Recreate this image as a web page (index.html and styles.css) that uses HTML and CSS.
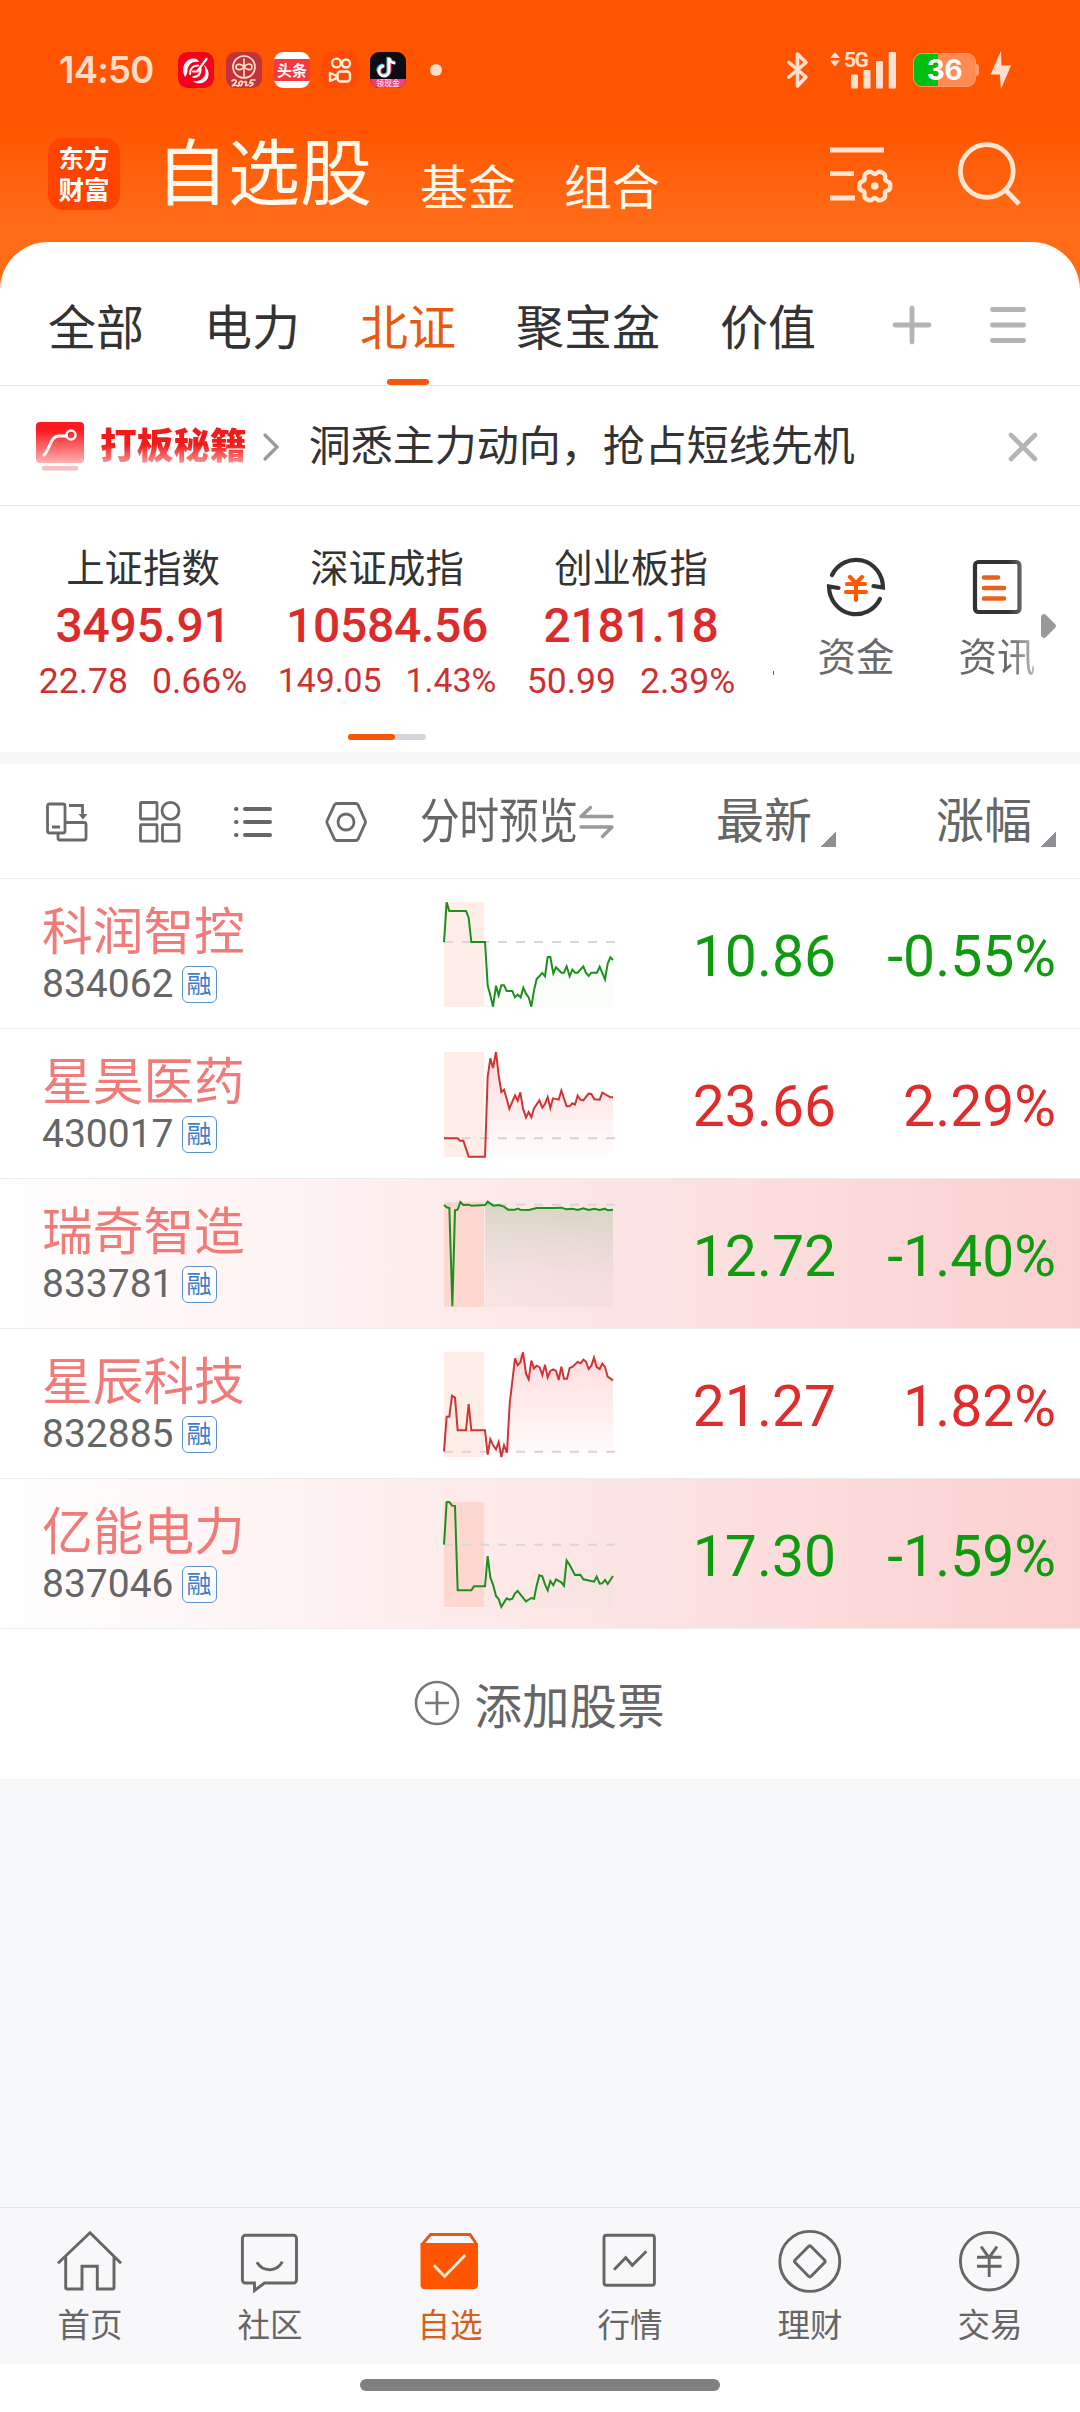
FILE: index.html
```html
<!DOCTYPE html>
<html lang="zh-CN">
<head>
<meta charset="utf-8">
<title>自选股</title>
<link rel="stylesheet" href="styles.css">
</head>
<body>
<div class="app">
  <header class="status">
    <span class="clock">14:50</span>
    <div class="apps">
      <svg class="app-icon" viewBox="0 0 36 36"><rect width="36" height="36" rx="9" fill="#f5001d"/><path d="M7 25C3 17 6 8 14 6.500c4-.5 6 1 7 3.500-6-1.500-11 2-11.500 8 0 3-1 5-2.500 7zM26 13c6 5 6 13 1 16.500-4 3-10 2-12-.5 7 1 12-3 12.500-8 0-3-.5-5-1.500-8z" fill="#fff"/><path d="M28.500 7 19.500 19M12 22c0-6 4-8.500 8-8.500M15.500 25c5 0 7-3 7-8M15 19.500h4" stroke="#fff" stroke-width="2.200" fill="none" stroke-linecap="round"/></svg>
      <svg class="app-icon" viewBox="0 0 36 36"><rect width="36" height="36" rx="9" fill="#c4303c"/><g fill="none" stroke="#f9dfc0" stroke-width="1.700" stroke-linecap="round"><circle cx="18" cy="15" r="11"/><path d="M18 7v18M18 15c-3-4-8-3-8 0s5 4 8 0 8-4 8 0-5 3-8 0M6 29c2-2 5-1 4 1s-3 3-4 4c2-1 4-1 6 0M13 31c2-3 4-2 3 1s-4 1-3-1M18 30c2-1 3 0 2 2s0 2 2 1M29 28h-4l-1 3c4-1 4 2 0 3"/></g></svg>
      <span class="app-icon news"><b>头条</b></span>
      <svg class="app-icon" viewBox="0 0 36 36"><rect width="36" height="36" rx="9" fill="#ff4a08"/><g fill="none" stroke="#fff0dc" stroke-width="2.400"><circle cx="14.500" cy="11" r="4.400"/><circle cx="24" cy="11.500" r="4"/><rect x="15.500" y="19.500" width="12.500" height="10" rx="3"/><path d="m8 21 6 2.500v3L8 29z" stroke-linejoin="round"/></g></svg>
      <span class="app-icon video"><svg viewBox="0 0 36 27"><path d="M19 6v13a5 5 0 1 1-5-5M19 6c1 4 3 5 6 5" fill="none" stroke="#25e4e4" stroke-width="3" transform="translate(-1 -1)"/><path d="M19 6v13a5 5 0 1 1-5-5M19 6c1 4 3 5 6 5" fill="none" stroke="#fb2b57" stroke-width="3" transform="translate(1 0)"/><path d="M19 6v13a5 5 0 1 1-5-5M19 6c1 4 3 5 6 5" fill="none" stroke="#fff" stroke-width="2.800"/></svg><i>领现金</i></span>
    </div>
    <span class="dot"></span>
    <div class="status-right">
      <svg width="22" height="38" viewBox="0 0 22 38" fill="none" stroke="#ffdfcf" stroke-width="3.600" stroke-linejoin="round" stroke-linecap="round"><path d="M2 11.500 19 26 10.500 35V3L19 11.500 2 26"/></svg>
      <div class="signal">
        <svg width="68" height="38" viewBox="0 0 68 38" fill="#ffdfcf"><path d="m1 7 5-6 5 6zM1 9.500h10l-5 6z"/><rect x="22" y="23.500" width="7" height="14" rx="1"/><rect x="34.500" y="19" width="7" height="18.500" rx="1"/><rect x="47" y="10" width="7" height="27.500" rx="1"/><rect x="59.700" y="1" width="7.300" height="36.500" rx="1"/></svg>
        <b>5G</b>
      </div>
      <div class="battery"><span>36</span></div>
      <svg width="22" height="40" viewBox="0 0 22 40" fill="#ffdfcf"><path d="M11 1 .5 24.500H9.800L11 39 21 15.500h-9.500z"/></svg>
    </div>
  </header>

  <nav class="titlebar">
    <div class="logo"><span>东方</span><span>财富</span></div>
    <h1>自选股</h1>
    <a class="top-link">基金</a>
    <a class="top-link">组合</a>
    <div class="tools">
      <svg width="62" height="62" viewBox="0 0 62 62" fill="none" stroke="#ffe5d2" stroke-width="4.800"><path d="M0 8h54M0 31.700h24M0 56h25"/><path transform="translate(44.800 44)" stroke-width="4.400" d="M12.500-4.700Q15.500-3.900 15.500 0Q15.500 3.900 12.500 4.700Q9.500 5.500 10.300 8.500Q11.100 11.500 7.750 13.450Q4.400 15.400 2.200 13.200Q0 11-2.200 13.200Q-4.400 15.400-7.750 13.450Q-11.100 11.500-10.300 8.500Q-9.500 5.500-12.500 4.700Q-15.500 3.900-15.500 0Q-15.500-3.900-12.500-4.700Q-9.500-5.500-10.300-8.500Q-11.100-11.500-7.750-13.450Q-4.400-15.400-2.200-13.200Q0-11 2.200-13.200Q4.400-15.400 7.750-13.450Q11.100-11.500 10.300-8.500Q9.500-5.500 12.500-4.700z"/><circle cx="44.800" cy="44" r="3.800" fill="#ffe5d2" stroke="none"/></svg>
      <svg width="62" height="64" viewBox="0 0 62 64" fill="none" stroke="#ffe5d2" stroke-width="4.800"><circle cx="28.800" cy="29" r="26.400"/><path d="m47 47.500 14 14.500"/></svg>
    </div>
  </nav>

  <main class="sheet">
    <div class="tabs">
      <span>全部</span><span>电力</span><span class="active">北证</span><span>聚宝盆</span><span>价值</span>
      <div class="tab-tools">
        <svg width="40" height="40" viewBox="0 0 40 40" stroke="#b4b4b4" stroke-width="4.800" stroke-linecap="round"><path d="M3 20h34M20 3v34"/></svg>
        <svg width="36" height="40" viewBox="0 0 36 40" stroke="#b4b4b4" stroke-width="4.800" stroke-linecap="round"><path d="M2.400 4.500h31.200M2.400 20h31.200M2.400 35.500h31.200"/></svg>
      </div>
    </div>

    <div class="promo">
      <svg width="48" height="50" viewBox="0 0 48 50"><defs><linearGradient id="pg" x1="0" y1="0" x2="0" y2="1"><stop offset=".2" stop-color="#fb1a1f"/><stop offset="1" stop-color="#fbb2b2"/></linearGradient></defs><rect width="48" height="41" rx="4" fill="url(#pg)"/><rect x="6" y="44" width="36" height="4.500" rx="1.500" fill="#f7c1c1"/><path d="M8 33c6-5 6-19 15-19h7" fill="none" stroke="#fff" stroke-width="3" stroke-linecap="round"/><circle cx="35" cy="13" r="4.500" fill="none" stroke="#fff" stroke-width="2.500"/></svg>
      <b class="promo-name">打板秘籍</b>
      <svg class="chev" width="16" height="28" viewBox="0 0 16 28" fill="none" stroke="#999" stroke-width="3.200" stroke-linecap="round"><path d="m2 2 12 12L2 26"/></svg>
      <span class="promo-text">洞悉主力动向，抢占短线先机</span>
      <svg class="close" width="30" height="30" viewBox="0 0 30 30" stroke="#b4b4b4" stroke-width="4.600" stroke-linecap="round"><path d="m3 3 24 24M27 3 3 27"/></svg>
    </div>

    <section class="indices">
      <div class="index-row">
        <div class="index"><span>上证指数</span><strong>3495.91</strong><p><i>22.78</i><i>0.66%</i></p></div>
        <div class="index"><span>深证成指</span><strong>10584.56</strong><p class="fit"><i>149.05</i><i>1.43%</i></p></div>
        <div class="index"><span>创业板指</span><strong>2181.18</strong><p><i>50.99</i><i>2.39%</i></p></div>
        <span class="peek"></span>
        <div class="shortcut">
          <svg width="60" height="62" viewBox="0 0 60 62" fill="none" stroke="#333" stroke-width="4.200" stroke-linecap="round" ><path d="M6 19A27 28 0 0 1 57 31.500L47.500 30M54 43A27 28 0 0 1 3 30.500L12.500 32"/><path d="m24 21 6 6 6-6M21 28h18M20 36h20M30 28v16" stroke="#fd5904"/></svg>
          <span>资金</span>
        </div>
        <div class="shortcut news-link">
          <svg width="60" height="62" viewBox="0 0 60 62" fill="none" stroke="#333" stroke-width="4.200" stroke-linecap="round"><rect x="8" y="6" width="44.500" height="50" rx="3.500"/><path d="M17 21.500h14M17 32h20M17 42.500h20" stroke="#e9601a" stroke-width="4.600"/></svg>
          <span>资讯</span>
        </div>
        <svg class="more" width="15" height="24" viewBox="0 0 15 24"><path d="M0 2Q3-2 6 2l8 8q2 2 0 4l-8 8q-3 4-6 0z" fill="#999"/></svg>
      </div>
      <div class="pager"><span></span></div>
    </section>

    <div class="list-head">
      <div class="views">
        <svg width="42" height="42" viewBox="0 0 42 42" fill="none" stroke="#6a6a6a" stroke-width="2.800"><rect x="1.500" y="3" width="17.500" height="29" rx="2"/><path d="M6 26h8M23 4.500h13.500V15M19 21.500h19a2 2 0 0 1 2 2V37a2 2 0 0 1-2 2H14a2 2 0 0 1-2-2v-4.500"/><path d="M32.500 13h9L37 18.500z" fill="#6a6a6a" stroke="none"/></svg>
        <svg width="42" height="42" viewBox="0 0 42 42" fill="none" stroke="#6a6a6a" stroke-width="2.800"><rect x="1.500" y="1.500" width="16.500" height="16.500" rx="1"/><circle cx="31.500" cy="9.800" r="8.500"/><rect x="1.500" y="23.700" width="16.500" height="16.500" rx="1"/><rect x="23.500" y="23.700" width="16.500" height="16.500" rx="1"/></svg>
        <svg width="42" height="42" viewBox="0 0 42 42" fill="none" stroke="#666" stroke-width="4" stroke-linecap="round"><path d="M13 8h25M13 21h25M13 34h25M4 8h.5M4 21h.5M4 34h.5"/></svg>
        <svg width="42" height="42" viewBox="0 0 42 42" fill="none" stroke="#6a6a6a" stroke-width="2.800"><path d="M12 2.500h18.500a3 3 0 0 1 2.600 1.500l7 15.500a3 3 0 0 1 0 3l-7 15.500a3 3 0 0 1-2.600 1.500H12a3 3 0 0 1-2.600-1.500l-7.200-15.500a3 3 0 0 1 0-3L9.400 4A3 3 0 0 1 12 2.500z"/><circle cx="21" cy="21" r="8"/></svg>
      </div>
      <span class="preview">分时预览</span>
      <svg class="swap" width="35" height="34" viewBox="0 0 35 34" fill="none" stroke="#999" stroke-width="3.400" stroke-linecap="round" stroke-linejoin="round"><path d="M33 11.500H2l9.500-9M2 22h31L23.500 31.500"/></svg>
      <span class="sort latest">最新<i></i></span>
      <span class="sort change">涨幅<i></i></span>
    </div>

    <svg class="defs" width="0" height="0"><defs>
      <linearGradient id="gFaint" x1="0" y1="0" x2="0" y2="1"><stop stop-color="#090" stop-opacity=".03"/><stop offset="1" stop-color="#090" stop-opacity=".015"/></linearGradient>
      <linearGradient id="gDeep" x1="0" y1="0" x2="0" y2="1"><stop stop-color="#1c8a1c" stop-opacity=".18"/><stop offset=".75" stop-color="#777" stop-opacity=".06"/><stop offset="1" stop-color="#a88" stop-opacity=".06"/></linearGradient>
      <linearGradient id="rFill" x1="0" y1="0" x2="0" y2="1"><stop stop-color="#f22" stop-opacity=".16"/><stop offset="1" stop-color="#f22" stop-opacity="0.01"/></linearGradient>
    </defs></svg>

    <div class="stock">
      <div class="who"><span class="name">科润智控</span><p>834062<em>融</em></p></div>
      <svg class="chart down" viewBox="72 65 513 315"><rect x="72" y="65" width="120" height="315"/><path class="base" d="M72 185H585"/><path fill="url(#gFaint)" d="M195 380V185l8 130 16 64 9-63 16-1 16 17 34 11 40 36 16-83 25-18 8-48 17 49 100 0 48-2 24-46 8 8V380z"/><polyline points="72,185 80,66 88,92 138,92 146,112 154,185 195,185 203,315 211,345 219,379 228,316 236,345 244,315 252,315 260,332 277,332 285,351 293,343 302,351 310,322 318,340 326,351 334,379 342,330 350,296 367,278 375,288 383,230 391,230 400,279 408,261 424,277 432,277 440,258 449,288 457,268 465,277 473,277 490,258 498,278 506,287 514,277 531,277 539,259 555,297 563,250 571,231 579,239"/></svg>
      <span class="price fall">10.86</span><span class="pct fall">-0.55%</span>
    </div>
    <div class="stock">
      <div class="who"><span class="name">星昊医药</span><p>430017<em>融</em></p></div>
      <svg class="chart up" viewBox="72 515 513 315"><rect x="72" y="515" width="120" height="315"/><path class="base" d="M72 774H585"/><path fill="url(#rFill)" d="M195 829 203 590 211 534 219 563 228 515 236 585 244 635 252 628 268 685 285 645 301 636 318 711 334 711 358 660 383 650 391 683 424 631 440 678 465 673 473 646 506 640 539 658 547 637 579 651V830z"/><polyline points="72,774 113,774 120,781 130,781 146,829 195,829 203,590 211,534 219,563 228,515 236,585 244,635 252,628 260,655 268,685 285,645 293,661 301,636 309,685 318,711 326,695 334,711 342,684 358,660 367,682 375,671 383,650 391,683 399,654 416,658 424,631 440,678 449,678 457,669 465,673 473,646 481,658 490,660 506,640 514,641 523,657 539,658 547,637 571,651 579,651"/></svg>
      <span class="price rise">23.66</span><span class="pct rise">2.29%</span>
    </div>
    <div class="stock hot">
      <div class="who"><span class="name">瑞奇智造</span><p>833781<em>融</em></p></div>
      <svg class="chart down" viewBox="72 965 513 315"><rect x="72" y="965" width="120" height="315"/><path class="base" d="M72 973H585"/><path fill="url(#gDeep)" d="M195 974 203 964 252 979 264 988 326 989 350 983 424 982 579 988V1280H195z"/><polyline points="72,974 80,981 88,983 97,1278 105,990 113,988 121,965 130,974 146,973 154,976 195,974 203,964 220,976 236,974 252,979 264,988 285,988 293,985 301,988 326,989 350,983 400,983 424,982 440,987 457,985 473,989 490,984 506,989 523,985 539,989 555,985 563,990 579,988"/></svg>
      <span class="price fall">12.72</span><span class="pct fall">-1.40%</span>
    </div>
    <div class="stock">
      <div class="who"><span class="name">星辰科技</span><p>832885<em>融</em></p></div>
      <svg class="chart up" viewBox="72 304 513 315"><rect x="72" y="304" width="120" height="315"/><path class="base" d="M72 603H585"/><path fill="url(#rFill)" d="M195 539 203 612 211 566 228 596 244 619 261 606 269 460 285 323 309 305 326 386 334 330 383 380 400 356 416 388 424 348 432 384 441 384 457 349 490 327 506 355 522 321 547 339 563 378 579 389V619H195z"/><polyline points="72,602 80,498 88,498 96,435 105,441 113,539 138,539 146,460 154,539 195,539 203,612 211,566 219,583 228,596 236,574 244,619 252,584 261,606 269,460 285,323 293,344 301,335 309,305 318,369 326,386 334,330 342,354 350,345 359,350 367,373 375,342 383,380 391,361 400,356 408,361 416,388 424,348 432,384 441,384 449,352 457,349 473,334 482,338 490,327 498,333 506,355 514,345 522,321 530,349 539,355 547,339 555,349 563,378 579,389"/></svg>
      <span class="price rise">21.27</span><span class="pct rise">1.82%</span>
    </div>
    <div class="stock hot">
      <div class="who"><span class="name">亿能电力</span><p>837046<em>融</em></p></div>
      <svg class="chart down" viewBox="72 754 513 315"><rect x="72" y="754" width="120" height="315"/><path class="base" d="M72 882H585"/><path fill="url(#gFaint)" d="M195 1007 203 916 228 1036 244 1069 293 1021 318 1052 342 1044 358 974 383 1019 432 1005 440 929 465 973 522 993 563 1000 579 976V1069H195z"/><polyline points="72,882 80,754 88,754 96,765 105,766 113,1019 154,1019 162,1007 195,1007 203,916 211,980 220,1005 228,1036 236,1045 244,1069 260,1043 268,1047 277,1044 285,1028 293,1021 301,1031 318,1052 334,1042 342,1044 350,1005 358,974 367,977 375,1001 383,1019 391,991 400,1004 408,986 424,995 432,1005 440,929 449,943 465,973 481,972 490,986 522,993 530,978 539,999 547,998 555,988 563,1000 579,976"/></svg>
      <span class="price fall">17.30</span><span class="pct fall">-1.59%</span>
    </div>

    <div class="add">
      <svg width="46" height="46" viewBox="0 0 46 46" fill="none" stroke="#777" stroke-width="2.600"><circle cx="23" cy="23" r="21"/><path d="M11 23h24M23 11v24"/></svg>
      <span>添加股票</span>
    </div>
  </main>

  <div class="blank"></div>

  <footer class="bottom">
    <a><svg viewBox="0 0 72 66"><path d="M4 37.300 36 6.700 67 37.300M11.700 31v30.500a1.500 1.500 0 0 0 1.500 1.500H28V40.300H43.300V63H58.500A1.500 1.500 0 0 0 60 61.500V31"/></svg>首页</a>
    <a><svg viewBox="0 0 72 66"><path d="M11.400 9.300H59.500a3 3 0 0 1 3 3V54a3 3 0 0 1-3 3H30.500L20.500 64.500V57H11.400a3 3 0 0 1-3-3V12.300a3 3 0 0 1 3-3zM22.900 36.300c6 10 20 10 25.500-.6"/></svg>社区</a>
    <a class="on"><svg viewBox="0 0 72 66"><path d="M7.700 19 16.500 8.500H56L63 19" /><path class="solid" d="M6.500 17H64V59a4.300 4.300 0 0 1-4.300 4.300H10.800A4.300 4.300 0 0 1 6.500 59z"/><path class="tick" d="m19.900 39.300 10.700 11.200L51.200 29"/></svg>自选</a>
    <a><svg viewBox="0 0 72 66"><rect x="10" y="9.200" width="50.400" height="50" rx="2.500"/><path d="M20 43.700 31.700 31.700 38.300 39.300 52.400 25.300"/></svg>行情</a>
    <a><svg viewBox="0 0 72 66"><circle cx="35.800" cy="35.400" r="30"/><path d="M34.500 20.500q1.300-1.300 2.600 0L50.500 34q1.300 1.300 0 2.600L37.100 50.300q-1.300 1.300-2.600 0L21.100 36.600q-1.300-1.300 0-2.600z"/></svg>理财</a>
    <a><svg viewBox="0 0 72 66"><circle cx="35.200" cy="35.200" r="28.800"/><path d="M27.100 20.700 35 31.700 43 20.700M23 31.300H47.500M23 40.300H47.500M35.200 31.700V51"/></svg>交易</a>
  </footer>
  <div class="home"><span></span></div>
</div>
</body>
</html>
```
FILE: styles.css
```css
* { box-sizing: border-box; margin: 0; padding: 0; }
body {
  width: 1080px;
  font-family: Roboto, "Noto Sans CJK SC", sans-serif;
  font-weight: 400;
  color: #333;
  background: #f7f8fa;
}
svg { display: block; flex: none; overflow: visible; }
i, em { font-style: normal; }
.app {
  display: flex; flex-direction: column;
  height: 2412px; overflow: hidden;
  background: linear-gradient(#ff5500 125px, #ff6c18 225px, #ff6a15 300px) no-repeat;
  background-size: 100% 300px;
  background-color: #f7f8fa;
}

/* status bar */
.status { height: 138px; padding: 2px 68px 0 59px; display: flex; align-items: center; flex: none; }
.clock { width: 119px; font: 600 36.5px/40px Inter, sans-serif; letter-spacing: -.8px; color: #ffdcc8; }
.apps { display: flex; gap: 12px; }
.app-icon { width: 36px; height: 36px; border-radius: 9px; overflow: hidden; display: block; }
.news { background: #fff; display: flex; align-items: center; }
.news b { width: 36px; height: 22px; background: #f6393f; color: #fff; font: 700 15px/22px "Noto Sans CJK SC", sans-serif; text-align: center; }
.video { background: #0d0b14; }
.video svg { width: 36px; height: 27px; }
.video i { display: block; height: 9px; background: linear-gradient(90deg, #f23a63, #e8458f); color: #fff; font: 8px/8px "Noto Sans CJK SC", sans-serif; text-align: center; }
.dot { width: 12px; height: 12px; border-radius: 50%; background: #ffdccb; margin-left: 24px; }
.status-right { margin-left: auto; display: flex; align-items: center; }
.signal { position: relative; margin: 0 16px 0 20px; }
.signal b { position: absolute; left: 15px; top: -2px; font: 700 21px/22px Roboto, sans-serif; letter-spacing: -1.5px; color: #ffdfcf; }
.battery {
  position: relative; width: 63px; height: 34px; border-radius: 9px; margin-right: 14px;
  background: linear-gradient(90deg, #00be12 24px, #ff8a52 24px); border: 1px solid #ff9a6a;
  text-align: center; font: 700 28px/33px Inter, sans-serif; letter-spacing: -.5px; color: #fff;
}
.battery::after { content: ""; position: absolute; right: -4px; top: 10px; width: 3px; height: 12px; border-radius: 0 3px 3px 0; background: #ff9a6a; }

/* title bar */
.titlebar { height: 104px; flex: none; display: flex; padding-left: 48px; color: #fff8ec; }
.logo { width: 72px; height: 72px; border-radius: 15px; background: #ff4300; color: #fff; font: 700 25.5px/31px Roboto, "Noto Sans CJK SC", sans-serif; text-align: center; padding-top: 6px; }
.logo span { display: block; }
.titlebar h1 { margin: 1px 48px 0 36px; font-weight: 400; font-size: 72px; line-height: 72px; }
.top-link { font-size: 48px; line-height: 48px; margin: 27px 48px 0 0; }
.tools { margin-left: auto; margin-right: 60px; display: flex; gap: 66px; padding-top: 4px; }

.sheet { background: #fff; border-radius: 48px 48px 0 0; flex: none; }

/* group tabs */
.tabs { height: 144px; border-bottom: 1px solid #e4e4e4; display: flex; gap: 60px; padding: 63px 54px 0 48px; font-size: 48px; line-height: 48px; }
.tabs .active { color: #e8590c; position: relative; }
.tabs .active::after { content: ""; position: absolute; left: 27px; top: 74px; width: 42px; height: 6px; border-radius: 3px; background: #f4560a; }
.tab-tools { margin-left: auto; display: flex; gap: 58px; }

/* promo strip */
.promo { height: 120px; border-bottom: 1px solid #e4e4e4; padding: 2px 42px 0 36px; display: flex; align-items: center; }
.promo-name { margin: 0 16px; font-weight: 900; font-size: 36.7px; line-height: 44px; color: transparent; background: linear-gradient(#f21b1b 45%, #f98f8f 85%); -webkit-background-clip: text; background-clip: text; }
.promo-text { margin-left: 30px; font-size: 42px; line-height: 48px; }
.close { margin-left: auto; }

/* indices */
.indices { height: 246px; }
.index-row { display: flex; padding-left: 21px; height: 228px; }
.index { width: 244px; padding-top: 39px; display: flex; flex-direction: column; align-items: center; color: #dc2b2b; flex: none; }
.index span { font-size: 38.4px; line-height: 48px; color: #333; }
.index strong { font-weight: 500; font-size: 48px; line-height: 56px; margin-top: 5px; letter-spacing: -.3px; }
.index p { display: flex; gap: 24px; font-size: 35.5px; line-height: 40px; margin-top: 7px; color: #cc3030; }
.index .fit { font-size: 33.8px; }
.peek { width: 1px; height: 4px; background: #d33; margin: 165px 43px 0 20px; flex: none; }
.shortcut { width: 78px; margin-right: 63px; padding-top: 50px; display: flex; flex-direction: column; align-items: center; font-size: 38.4px; line-height: 48px; color: #6a6a6a; flex: none; }
.shortcut span { margin-top: 16px; white-space: nowrap; }
.news-link { margin-right: 5px; -webkit-mask-image: linear-gradient(90deg, #000 65%, rgba(0,0,0,.45)); mask-image: linear-gradient(90deg, #000 65%, rgba(0,0,0,.45)); }
.more { margin-top: 108px; }
.pager { width: 78px; height: 6px; border-radius: 3px; background: #d2d6da; margin-left: 348px; }
.pager span { display: block; width: 47px; height: 6px; border-radius: 3px; background: #f4560a; }

/* list header */
.list-head { height: 127px; border-top: 12px solid #f6f7f9; border-bottom: 1px solid #ebebeb; display: flex; align-items: center; padding: 1px 24px 0 46px; color: #666; font-size: 48px; }
.views { display: flex; gap: 51px; width: 374px; flex: none; }
.preview { width: 159px; white-space: nowrap; transform: scaleX(.823); transform-origin: 0 50%; line-height: 56px; flex: none; }
.sort { display: flex; line-height: 56px; }
.sort i { margin: 38px 0 0 9px; width: 15px; height: 15px; background: linear-gradient(135deg, transparent 50%, #8f8f94 50%); }
.latest { margin-left: 102px; }
.change { margin-left: auto; }

/* stock rows */
.defs { position: absolute; }
.stock { height: 150px; border-bottom: 1px solid #ebebeb; display: flex; padding: 0 24px 0 42px; }
.hot { background: linear-gradient(90deg, #fff, #fbd0d0); }
.who { width: 402px; padding-top: 26px; }
.name { display: block; font-size: 50.7px; line-height: 56px; color: #f07b78; white-space: nowrap; }
.who p { display: flex; align-items: center; font-size: 39px; line-height: 42px; margin-top: 2px; color: #666; }
.who em { width: 35px; height: 37px; border: 1px solid #5b93c9; border-radius: 6px; margin-left: 8px; color: #3f7cc4; background: #fff; font-size: 25px; line-height: 36px; text-align: center; }
.chart { width: 171px; height: 105px; margin-top: 23px; }
.chart rect { fill: #ff5010; fill-opacity: .1; }
.hot .chart rect { fill-opacity: .12; }
.chart .base { stroke: #d6d6dc; stroke-width: 6; stroke-dasharray: 27 27; }
.chart polyline { fill: none; stroke-width: 6; stroke-linejoin: miter; }
.down polyline { stroke: #1c8f1c; }
.up polyline { stroke: #d03434; }
.price, .pct { text-align: right; font-size: 57px; line-height: 60px; padding-top: 48px; }
.price { width: 221px; }
.pct { width: 220px; }
.fall { color: #0f9a0f; }
.rise { color: #df2c2c; }

.add { height: 150px; display: flex; align-items: center; justify-content: center; gap: 15px; padding: 0 2px 2px 0; font-size: 47.5px; color: #666; }
.blank { flex: 1; }

/* bottom navigation */
.bottom { height: 157px; border-top: 1px solid #e2e3e5; background: #f8f8fa; display: flex; flex: none; }
.bottom a { width: 180px; padding-top: 18px; display: flex; flex-direction: column; align-items: center; font-size: 32.5px; line-height: 40px; color: #666; }
.bottom svg { width: 72px; height: 66px; margin-bottom: 14px; fill: none; stroke: #666; stroke-width: 2.9; }
.bottom .on { color: #d4601f; }
.bottom .on svg { stroke: #e4590f; }
.bottom .on .solid { fill: #ff5500; stroke: none; }
.bottom .on .tick { stroke: #ffe8d8; }
.home { height: 48px; background: #fff; padding-top: 15px; flex: none; }
.home span { display: block; width: 360px; height: 12px; border-radius: 6px; background: #808080; margin: 0 auto; }
```
